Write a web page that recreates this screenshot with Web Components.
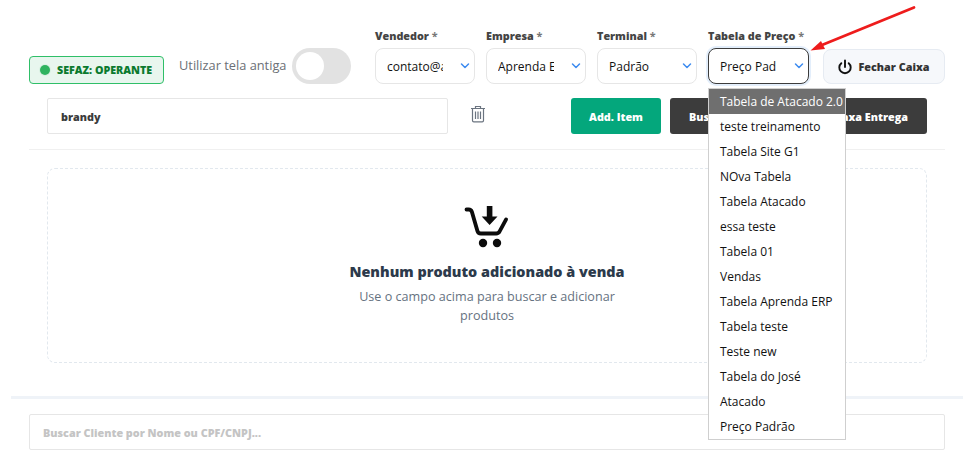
<!DOCTYPE html>
<html lang="pt-BR">
<head>
<meta charset="utf-8">
<title>Venda</title>
<style>
  html, body { margin: 0; background: #fff; }
  body { font-family: "Open Sans", sans-serif; width: 973px; height: 463px; overflow: hidden; position: relative; }
</style>
</head>
<body>
<sale-screen></sale-screen>
<script>
class SefazBadge extends HTMLElement {
  constructor() {
    super();
    this.attachShadow({ mode: 'open' });
  }
  connectedCallback() {
    this.shadowRoot.innerHTML = `
      <style>
        :host { display: flex; flex: none; align-items: center; box-sizing: border-box; width: 135px; height: 28px; padding-left: 10px; gap: 7px;
          background: #e8f6ee; border: 1px solid #2fbf68; border-radius: 4px; }
        .dot { width: 10px; height: 10px; border-radius: 50%; background: #2fb35f; box-shadow: 0 0 0 1px #d8f0e2; }
        .txt { font-size: 10.700px; font-weight: 800; color: #0b7a2e; white-space: nowrap; }
      </style>
      <span class="dot"></span><span class="txt"><slot></slot></span>
    `;
  }
}
customElements.define('sefaz-badge', SefazBadge);

class ToggleSwitch extends HTMLElement {
  constructor() {
    super();
    this.attachShadow({ mode: 'open' });
  }
  connectedCallback() {
    this.shadowRoot.innerHTML = `
      <style>
        :host { display: flex; flex: none; align-items: center; gap: 7px; height: 36px; width: 172px; }
        .lbl { width: 106px; font-size: 12.800px; color: #6b6f76; white-space: nowrap; position: relative; top: -1px; }
        .track { display: flex; align-items: center; box-sizing: border-box; width: 59px; height: 36px; padding-left: 4px; border-radius: 18px; background: #e2e2e2; }
        .knob { width: 28px; height: 28px; border-radius: 50%; background: #fff; }
      </style>
      <span class="lbl"><slot></slot></span>
      <span class="track"><span class="knob"></span></span>
    `;
  }
}
customElements.define('toggle-switch', ToggleSwitch);

class SelectField extends HTMLElement {
  constructor() {
    super();
    this.attachShadow({ mode: 'open' });
  }
  connectedCallback() {
    const focused = this.hasAttribute('focused');
    this.shadowRoot.innerHTML = `
      <style>
        :host { display: flex; flex: none; flex-direction: column; gap: 5px; position: relative; width: 100px; }
        .label { font-size: 10.800px; font-weight: 800; color: #444; white-space: nowrap; line-height: 15px; }
        .label i { font-style: normal; font-weight: 700; color: #777; }
        .box { display: flex; align-items: center; justify-content: space-between; box-sizing: border-box; height: 36px; padding: 0 3px 0 11px;
          background: #fff; border: 1px solid #e6e6e6; border-radius: 8px; font-size: 12px; color: #111; }
        .box.focused { border-color: #3c3c3c; box-shadow: 0 0 0 2px #e3eefb; }
        .val { width: 56px; overflow: hidden; white-space: nowrap; }
        svg { width: 12px; height: 8px; flex: none; }
        ::slotted(*) { position: absolute; left: 0; top: 60px; }
      </style>
      <div class="label">${this.getAttribute('label')} <i>*</i></div>
      <div class="box ${focused ? 'focused' : ''}">
        <span class="val">${this.getAttribute('value')}</span>
        <svg viewBox="0 0 12 8"><path d="M2.500 2 6 5.500 9.500 2" fill="none" stroke="#3d8bf0" stroke-width="1.500" stroke-linecap="round" stroke-linejoin="round"/></svg>
      </div>
      <slot></slot>
    `;
  }
}
customElements.define('select-field', SelectField);

class OptionList extends HTMLElement {
  constructor() {
    super();
    this.attachShadow({ mode: 'open' });
  }
  connectedCallback() {
    const items = (this.getAttribute('items') || '').split('|');
    this.shadowRoot.innerHTML = `
      <style>
        :host { display: block; box-sizing: border-box; width: 138px; background: #fff; border: 1px solid #cfcfcf; z-index: 5; }
        div { box-sizing: border-box; height: 25px; line-height: 25px; padding-left: 11px; font-size: 12px; color: #111; white-space: nowrap; }
        div.on { background: #6f6f6f; color: #fff; }
      </style>
      ${items.map((t, i) => `<div class="${i === 0 ? 'on' : ''}">${t}</div>`).join('')}
    `;
  }
}
customElements.define('option-list', OptionList);

class ActionButton extends HTMLElement {
  constructor() {
    super();
    this.attachShadow({ mode: 'open' });
  }
  connectedCallback() {
    this.shadowRoot.innerHTML = `
      <style>
        :host { display: flex; flex: none; align-items: center; justify-content: center; box-sizing: border-box; height: 36px; padding: 0 19px; border-radius: 3px;
          background: #3c3c3c; color: #fff; font-size: 10.800px; font-weight: 800; white-space: nowrap; }
        :host([kind="green"]) { background: #04a77c; width: 90px; padding: 0; }
        :host([kind="light"]) { background: #f6f8fb; color: #333; border: 1px solid #e6ebf2; border-radius: 8px; width: 122px; height: 35px; padding: 0 2px 0 0; gap: 6px; }
        svg { width: 16px; height: 16px; display: none; }
        :host([kind="light"]) svg { display: block; }
      </style>
      <svg viewBox="0 0 16 16" fill="none" stroke="#111" stroke-width="1.900" stroke-linecap="round"><path d="M8 1.500v6.500"/><path d="M4.300 4.200a5.700 5.700 0 1 0 7.400 0"/></svg>
      <slot></slot>
    `;
  }
}
customElements.define('action-button', ActionButton);

class TextBox extends HTMLElement {
  constructor() {
    super();
    this.attachShadow({ mode: 'open' });
  }
  connectedCallback() {
    this.shadowRoot.innerHTML = `
      <style>
        :host { display: flex; align-items: center; box-sizing: border-box; height: 36px; padding: 0 13px; background: #fff; border: 1px solid #e6e6e6; border-radius: 2px;
          font-size: 10.800px; font-weight: 800; color: #3c3c3c; }
        :host([placeholder]) { color: #c4c4c4; }
      </style>
      <slot></slot>
    `;
  }
}
customElements.define('text-box', TextBox);

class EmptyState extends HTMLElement {
  constructor() {
    super();
    this.attachShadow({ mode: 'open' });
  }
  connectedCallback() {
    this.shadowRoot.innerHTML = `
      <style>
        :host { display: flex; flex-direction: column; align-items: center; box-sizing: border-box; height: 195px; padding-top: 35px;
          border: 1px dashed #e2e8ee; border-radius: 8px; }
        svg { width: 46px; height: 46px; display: block; }
        h3 { margin: 12px 0 0; font-size: 14.400px; line-height: 20px; font-weight: 800; color: #2c3a4b; white-space: nowrap; }
        p { margin: 5px 0 0; width: 280px; text-align: center; font-size: 12.600px; line-height: 19px; color: #66727f; }
      </style>
      <svg viewBox="0 0 46 46">
        <path d="M2.500 5.500h2.200c1.600 0 2.700.9 3.200 2.400l5.500 19c.5 1.700 1.700 2.600 3.400 2.600h15.400c1.600 0 2.700-.7 3.400-2.100l6.500-12" fill="none" stroke="#0c0c0c" stroke-width="3.800" stroke-linecap="round" stroke-linejoin="round"/>
        <path d="M22.800 2h5.600v10.500H33.500L25.600 21 17.700 12.500h5.100z" fill="#0c0c0c"/>
        <circle cx="19" cy="39" r="4.200" fill="#0c0c0c"/><circle cx="33" cy="39" r="4.200" fill="#0c0c0c"/>
      </svg>
      <h3><slot name="title"></slot></h3>
      <p><slot name="text"></slot></p>
    `;
  }
}
customElements.define('empty-state', EmptyState);

class SaleScreen extends HTMLElement {
  constructor() {
    super();
    this.attachShadow({ mode: 'open' });
  }
  connectedCallback() {
    const tabelas = 'Tabela de Atacado 2.0|teste treinamento|Tabela Site G1|NOva Tabela|Tabela Atacado|essa teste|Tabela 01|Vendas|Tabela Aprenda ERP|Tabela teste|Teste new|Tabela do José|Atacado|Preço Padrão';
    this.shadowRoot.innerHTML = `
      <style>
        :host { display: block; position: relative; height: 463px; font-family: "Open Sans", sans-serif; }
        .top { display: flex; align-items: flex-end; padding: 28px 28px 0 29px; height: 56px; }
        sefaz-badge { margin-right: 15px; }
        toggle-switch { margin-right: 24px; }
        .fields { display: flex; flex: none; gap: 11px; margin-right: 14px; }
        .row { display: flex; align-items: center; padding: 14px 46px 0 47px; }
        .row text-box { width: 401px; flex: none; }
        .trash { width: 16px; height: 18px; margin: -4px 85px 0 22px; flex: none; display: block; }
        .btns { display: flex; flex: 1; gap: 9px; }
        .btns .last { margin-left: auto; }
        .rule { height: 1px; background: #f0f0f0; margin: 15px 28px 18px 29px; }
        .wrap { padding: 0 46px 0 47px; }
        .thick { height: 3px; background: #eff3f8; margin: 33px 10px 15px 11px; }
        .bottom { padding: 0 28px 0 29px; }
        .arrow { position: absolute; left: 800px; top: 0; width: 125px; height: 60px; z-index: 6; }
      </style>
      <div class="top">
        <sefaz-badge>SEFAZ: OPERANTE</sefaz-badge>
        <toggle-switch>Utilizar tela antiga</toggle-switch>
        <div class="fields">
          <select-field label="Vendedor" value="contato@aprenda"></select-field>
          <select-field label="Empresa" value="Aprenda ERP"></select-field>
          <select-field label="Terminal" value="Padrão"></select-field>
          <select-field label="Tabela de Preço" value="Preço Padrão" focused style="width:101px">
            <option-list items="${tabelas}"></option-list>
          </select-field>
        </div>
        <action-button kind="light">Fechar Caixa</action-button>
      </div>
      <div class="row">
        <text-box>brandy</text-box>
        <svg class="trash" viewBox="0 0 16 18" fill="none" stroke="#6b7480" stroke-width="1.200"><path d="M1 3.500h14M5.500 3.500V1.500h5v2M2.500 3.500v12c0 .8.500 1.300 1.300 1.300h8.400c.8 0 1.300-.5 1.300-1.300v-12M5.500 6.500v7.500M8 6.500v7.500M10.500 6.500v7.500"/></svg>
        <div class="btns">
          <action-button kind="green">Add. Item</action-button>
          <action-button>Buscar Produto</action-button>
          <action-button class="last">Taxa Entrega</action-button>
        </div>
      </div>
      <div class="rule"></div>
      <div class="wrap">
        <empty-state>
          <span slot="title">Nenhum produto adicionado à venda</span>
          <span slot="text">Use o campo acima para buscar e adicionar produtos</span>
        </empty-state>
      </div>
      <div class="thick"></div>
      <div class="bottom"><text-box placeholder>Buscar Cliente por Nome ou CPF/CNPJ...</text-box></div>
      <svg class="arrow" viewBox="0 0 125 60">
        <path d="M114 7.500 22 45" stroke="#ee1c1c" stroke-width="2.800" stroke-linecap="round" fill="none"/>
        <path d="M10.500 50.500 21 41l4 8z" fill="#ee1c1c"/>
      </svg>
    `;
  }
}
customElements.define('sale-screen', SaleScreen);
</script>
</body>
</html>
